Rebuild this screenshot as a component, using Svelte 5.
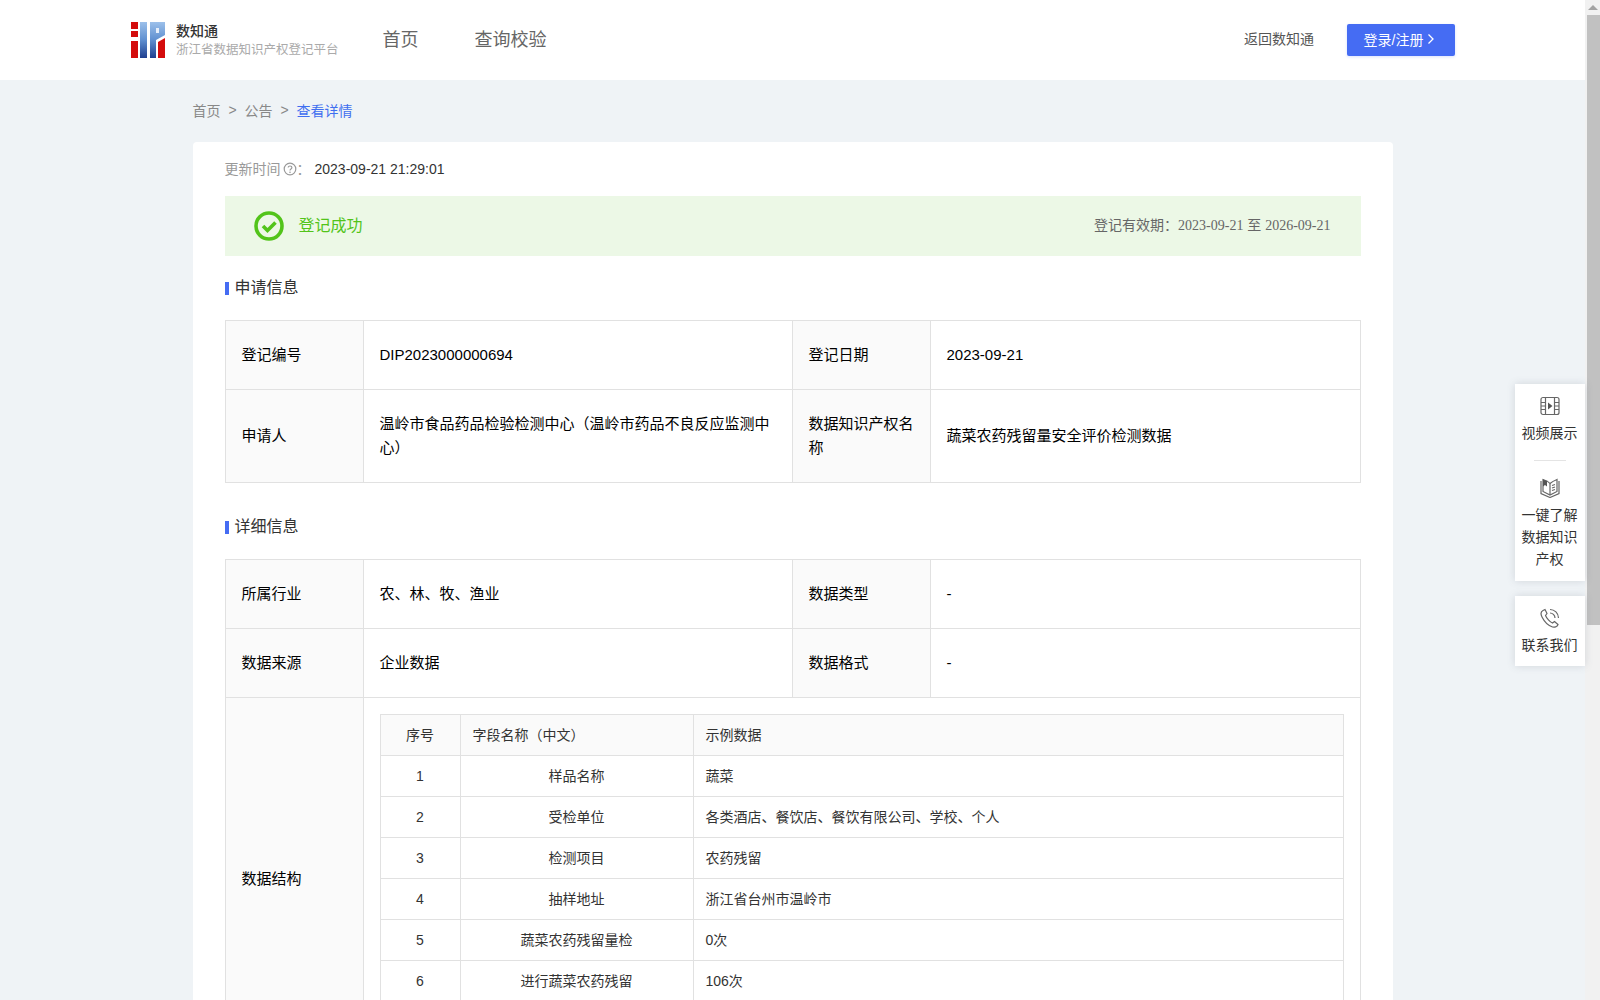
<script>
	const info = [
		[
			{ label: '登记编号', value: 'DIP2023000000694' },
			{ label: '登记日期', value: '2023-09-21' }
		],
		[
			{ label: '申请人', value: '温岭市食品药品检验检测中心（温岭市药品不良反应监测中心）' },
			{ label: '数据知识产权名称', value: '蔬菜农药残留量安全评价检测数据' }
		]
	];

	const fields = [
		['1', '样品名称', '蔬菜'],
		['2', '受检单位', '各类酒店、餐饮店、餐饮有限公司、学校、个人'],
		['3', '检测项目', '农药残留'],
		['4', '抽样地址', '浙江省台州市温岭市'],
		['5', '蔬菜农药残留量检', '0次'],
		['6', '进行蔬菜农药残留', '106次']
	];
</script>

<div class="page">
	<div class="main">
		<header>
			<div class="brand">
				<svg class="logo" width="34" height="36" viewBox="0 0 34 36">
					<defs>
						<linearGradient id="blue" x1="0" y1="0" x2="0" y2="1">
							<stop offset="0" stop-color="#9cc0ea" />
							<stop offset="0.5" stop-color="#5f8fd0" />
							<stop offset="1" stop-color="#1f3f8f" />
						</linearGradient>
					</defs>
					<rect x="0" y="0" width="7" height="7" fill="#d40c0c" />
					<rect x="0" y="9" width="7" height="6" fill="#d40c0c" />
					<rect x="0" y="19" width="7" height="17" fill="#d40c0c" />
					<rect x="9" y="0" width="7" height="36" fill="url(#blue)" />
					<path d="M19 0H34V13L25 18V36H19Z" fill="url(#blue)" />
					<rect x="25" y="6" width="3" height="5" fill="#e6eefa" />
					<path d="M27 20L34 16V36H27Z" fill="#d40c0c" />
				</svg>
				<div class="brandText">
					<div class="brandName">数知通</div>
					<div class="brandSub">浙江省数据知识产权登记平台</div>
				</div>
			</div>
			<nav>
				<span>首页</span>
				<span>查询校验</span>
			</nav>
			<span class="back">返回数知通</span>
			<button>登录/注册
				<svg width="8" height="12" viewBox="0 0 8 12"><path d="M1.5 1.5L6 6L1.5 10.5" /></svg>
			</button>
		</header>

		<div class="crumbs">
			<span>首页</span><i>&gt;</i><span>公告</span><i>&gt;</i><span class="current">查看详情</span>
		</div>

		<section class="card">
			<div class="updated">
				<span class="updatedLabel">更新时间</span>
				<svg width="14" height="14" viewBox="0 0 14 14">
					<circle cx="7" cy="7" r="5.8" />
					<path d="M5.2 5.6C5.2 3.4 8.9 3.5 8.9 5.6C8.9 7 7 7 7 8.5" />
					<circle class="dot" cx="7" cy="10.2" r="0.8" />
				</svg>
				<span class="updatedLabel">：</span>
				<span class="updatedValue">2023-09-21 21:29:01</span>
			</div>

			<div class="banner">
				<div class="status">
					<svg width="30" height="30" viewBox="0 0 30 30">
						<circle cx="15" cy="15" r="13" />
						<path d="M9 15L13.5 19.5L21.5 11.5" />
					</svg>
					<span>登记成功</span>
				</div>
				<div class="validity">登记有效期：<span class="serif">2023-09-21</span> 至 <span class="serif">2026-09-21</span></div>
			</div>

			<h3>申请信息</h3>
			<table class="outer">
				<colgroup><col class="c1" /><col class="c2" /><col class="c1" /><col /></colgroup>
				<tbody>
					<tr class="short">
						<th>{info[0][0].label}</th><td>{info[0][0].value}</td>
						<th>{info[0][1].label}</th><td>{info[0][1].value}</td>
					</tr>
					<tr class="tall">
						<th>{info[1][0].label}</th><td>{info[1][0].value}</td>
						<th>{info[1][1].label}</th><td>{info[1][1].value}</td>
					</tr>
				</tbody>
			</table>

			<h3 class="second">详细信息</h3>
			<table class="outer">
				<colgroup><col class="c1" /><col class="c2" /><col class="c1" /><col /></colgroup>
				<tbody>
					<tr class="short">
						<th>所属行业</th><td>农、林、牧、渔业</td>
						<th>数据类型</th><td>-</td>
					</tr>
					<tr class="short">
						<th>数据来源</th><td>企业数据</td>
						<th>数据格式</th><td>-</td>
					</tr>
					<tr class="structure">
						<th>数据结构</th>
						<td colspan="3" class="nested">
							<table class="inner">
								<colgroup><col class="n1" /><col class="n2" /><col /></colgroup>
								<thead>
									<tr><th class="mid">序号</th><th>字段名称（中文）</th><th>示例数据</th></tr>
								</thead>
								<tbody>
									{#each fields as row}
										<tr>
											<td class="mid">{row[0]}</td>
											<td class="mid">{row[1]}</td>
											<td>{row[2]}</td>
										</tr>
									{/each}
								</tbody>
							</table>
						</td>
					</tr>
				</tbody>
			</table>
		</section>
	</div>

	<div class="scrollbar">
		<div class="arrow"></div>
		<div class="thumb"></div>
	</div>

	<aside>
		<div class="widget">
			<div class="tool first">
				<svg width="20" height="20" viewBox="0 0 20 20">
					<rect x="1" y="1.5" width="18" height="17" rx="2" />
					<path d="M5.5 1.5V18.5M14.5 1.5V18.5M1 6.5H5.5M1 10H5.5M1 13.5H5.5M14.5 6.5H19M14.5 10H19M14.5 13.5H19" />
					<path class="solid" d="M8 6.5L12.5 10L8 13.5Z" />
				</svg>
				<span>视频展示</span>
			</div>
			<hr />
			<div class="tool second">
				<svg width="20" height="20" viewBox="0 0 20 20">
					<path d="M1 3V15.5L10 19.5L19 15.5V3" />
					<path d="M3 1.5C6 2.2 8.5 3.5 10 5.5C12 3.8 14.5 2.5 17 1.5V13.5L10 17L3 13.5Z" />
					<path class="solid" d="M3 1.5L7 3V8.5L5 7L3 8.5Z" />
					<path d="M10 5.5V17M12 7.5L15 6.5M12 10L15 9M12 12.5L15 11.5" />
				</svg>
				<span>一键了解<br />数据知识<br />产权</span>
			</div>
		</div>
		<div class="widget">
			<div class="tool">
				<svg width="20" height="20" viewBox="0 0 20 20">
					<path d="M3 2.5C1 3.5 0.5 6 2 9C4 13 8 17.5 12.5 19C15 19.5 17.5 18.5 18 16.5L14.5 13.5L12.5 15C10 14 6.5 10 5.5 7.5L7 5.5L5 1.5Z" />
					<path d="M10 1.5C14.5 1.5 18.5 5 18.5 10M10 5C12.5 5 15 7 15 10" />
				</svg>
				<span>联系我们</span>
			</div>
		</div>
	</aside>
</div>

<style>
	:global(body) {
		margin: 0;
		overflow: hidden;
	}

	.page {
		position: relative;
		display: flex;
		height: 1000px;
		overflow: hidden;
		background: #eff3f6;
		color: #333;
		font-family: "Liberation Sans", "Noto Sans CJK SC", sans-serif;
	}

	.main {
		flex: 1;
		min-width: 0;
	}

	header {
		display: flex;
		align-items: center;
		height: 80px;
		padding: 0 130px 0 131px;
		background: #fff;
	}

	.brand {
		display: flex;
		align-items: center;
		gap: 11px;
	}

	.brandName {
		font-size: 14px;
		line-height: 20px;
		font-weight: 500;
		color: #333;
	}

	.brandSub {
		font-size: 12.5px;
		line-height: 18px;
		color: #aaa;
	}

	nav {
		display: flex;
		gap: 56px;
		margin-left: 44px;
		padding-bottom: 4px;
		font-size: 18px;
		color: #666;
		flex: 1;
	}

	.back {
		padding-bottom: 4px;
		font-size: 14px;
		color: #555;
	}

	button {
		display: flex;
		align-items: center;
		justify-content: center;
		gap: 4px;
		width: 108px;
		height: 32px;
		margin-left: 33px;
		padding: 0 3px 3px 0;
		border: none;
		border-radius: 2px;
		background: #456cf3;
		box-shadow: 0 1px 3px rgba(69, 108, 243, 0.2);
		color: #fff;
		font: inherit;
		font-size: 14px;
	}

	button path {
		fill: none;
		stroke: #fff;
		stroke-width: 1.3;
	}

	.crumbs {
		display: flex;
		align-items: center;
		width: 1200px;
		height: 59px;
		margin: 0 auto;
		padding-bottom: 3px;
		font-size: 14px;
		color: #888;
	}

	.crumbs i {
		width: 24px;
		font-style: normal;
		text-align: center;
	}

	.current {
		color: #3f6ff0;
	}

	.card {
		width: 1136px;
		margin: 0 auto;
		padding: 14px 32px 40px;
		border-radius: 4px;
		background: #fff;
	}

	.updated {
		display: flex;
		align-items: center;
		height: 26px;
		font-size: 14px;
	}

	.updated svg {
		margin-left: 2px;
	}

	.updated circle {
		fill: none;
		stroke: #999;
		stroke-width: 1.2;
	}

	.updated path {
		fill: none;
		stroke: #999;
		stroke-width: 1.2;
	}

	.updated circle.dot {
		fill: #999;
		stroke: none;
	}

	.updatedLabel {
		padding-bottom: 2px;
		color: #999;
	}

	.updatedValue {
		margin-left: 4px;
		color: #333;
	}

	.banner {
		display: flex;
		align-items: center;
		justify-content: space-between;
		height: 60px;
		margin-top: 14px;
		padding: 0 30px 0 29px;
		background: #ecf8e6;
	}

	.status {
		display: flex;
		align-items: center;
		gap: 15px;
		font-size: 16px;
		color: #52c41a;
	}

	.status span {
		padding-bottom: 4px;
	}

	.status circle {
		fill: none;
		stroke: #52c41a;
		stroke-width: 3.6;
	}

	.status path {
		fill: none;
		stroke: #52c41a;
		stroke-width: 3.6;
	}

	.validity {
		padding-bottom: 4px;
		font-size: 14px;
		color: #666;
	}

	.serif {
		font-family: "Liberation Serif", serif;
	}

	h3 {
		position: relative;
		margin: 21px 0 21px;
		padding-left: 10px;
		font-size: 16px;
		line-height: 22px;
		font-weight: 400;
		color: #333;
	}

	h3::before {
		content: "";
		position: absolute;
		left: 0;
		top: 5px;
		width: 4px;
		height: 13px;
		background: #456cf3;
	}

	h3.second {
		margin-top: 33px;
	}

	table {
		width: 100%;
		border-collapse: collapse;
		table-layout: fixed;
	}

	.outer > colgroup .c1 {
		width: 138px;
	}

	.outer > colgroup .c2 {
		width: 429px;
	}

	.outer > tbody > tr > th,
	.outer > tbody > tr > td {
		padding: 0 16px;
		border: 1px solid #e1e1e1;
		font-size: 15px;
		line-height: 24px;
		color: #000;
		text-align: left;
	}

	.outer > tbody > tr > th {
		background: #fafafa;
		font-weight: 400;
	}

	.short {
		height: 69px;
	}

	.tall {
		height: 93px;
	}

	.structure {
		height: 362px;
	}

	.outer > tbody > tr > td.nested {
		padding: 16px;
		vertical-align: top;
	}

	.n1 {
		width: 80px;
	}

	.n2 {
		width: 233px;
	}

	.inner th,
	.inner td {
		height: 40px;
		padding: 0 12px;
		border: 1px solid #e1e1e1;
		font-size: 14px;
		color: #333;
		text-align: left;
	}

	.inner th {
		background: #fafafa;
		font-weight: 400;
	}

	.inner .mid,
	.inner th.mid {
		text-align: center;
	}

	.scrollbar {
		flex: none;
		width: 15px;
		background: #f1f1f1;
	}

	.arrow {
		width: 0;
		height: 0;
		margin: 5px auto 0;
		border: 5px solid transparent;
		border-top: none;
		border-bottom-color: #a3a3a3;
	}

	.thumb {
		width: 13px;
		height: 610px;
		margin: 5px 0 0 2px;
		background: #c1c1c1;
	}

	aside {
		position: absolute;
		top: 384px;
		right: 15px;
		display: flex;
		flex-direction: column;
		gap: 15px;
		width: 70px;
	}

	.widget {
		background: #fff;
		box-shadow: 0 0 8px rgba(90, 100, 120, 0.2);
	}

	.tool {
		display: flex;
		flex-direction: column;
		align-items: center;
		padding: 12px 1px 10px 0;
		font-size: 14px;
		line-height: 22px;
		color: #333;
		text-align: center;
	}

	.tool.first {
		padding-bottom: 16px;
	}

	.tool.second {
		padding-top: 17px;
		padding-bottom: 11px;
	}

	.tool svg {
		margin-bottom: 6px;
	}

	.tool path,
	.tool rect {
		fill: none;
		stroke: #666;
		stroke-width: 1.2;
	}

	.tool path.solid {
		fill: #555;
		stroke: none;
	}

	hr {
		width: 32px;
		height: 1px;
		margin: 0 auto;
		border: none;
		background: #e4e4e4;
	}
</style>
